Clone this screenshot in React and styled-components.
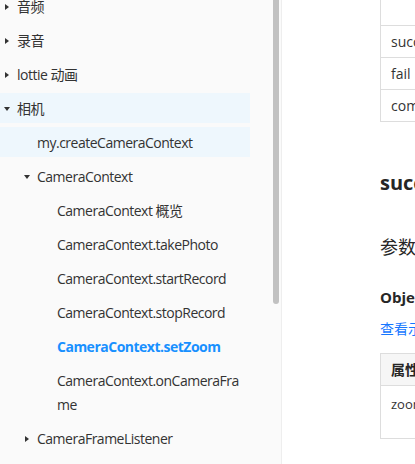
import styled, { createGlobalStyle } from 'styled-components';

const GlobalStyle = createGlobalStyle`
  html, body {
    margin: 0;
    padding: 0;
    height: 464px;
    overflow: hidden;
    background: #fff;
  }
  body {
    font-family: 'Open Sans', 'Noto Sans CJK SC', sans-serif;
    font-size: 14px;
    color: #333;
  }
`;

const Page = styled.div`
  display: flex;
  height: 464px;
  overflow: hidden;
`;

const Sidebar = styled.aside`
  width: 281px;
  flex: none;
  display: flex;
  background: #fafafa;
  border-right: 1px solid #eeeeee;
  overflow: hidden;
  letter-spacing: -0.5px;
`;

const NavList = styled.ul`
  width: 270px;
  margin: -9px 0 0;
  padding: 0;
  list-style: none;
`;

const NavItem = styled.li`
  width: 250px;
  box-sizing: border-box;
  display: flex;
  align-items: center;
  padding: 4px 10px 2px ${(p) => 17 + p.$level * 20}px;
  margin-bottom: 4px;
  line-height: 24px;
  background: ${(p) => (p.$highlight ? '#eef7fd' : 'transparent')};
  color: ${(p) => (p.$active ? '#1890ff' : '#333')};
  font-weight: ${(p) => (p.$active ? 700 : 400)};
`;

const Label = styled.span`
  min-width: 0;
  word-break: break-all;
`;

const Caret = styled.span`
  flex: none;
  width: 0;
  height: 0;
  border-style: solid;
  ${(p) =>
    p.$open
      ? `
    border-width: 4px 3px 0 3px;
    border-color: #333 transparent transparent transparent;
    margin: 0 7px 0 -13px;
  `
      : `
    border-width: 3px 0 3px 4px;
    border-color: transparent transparent transparent #333;
    margin: 0 8px 0 -12px;
  `}
`;

const ScrollTrack = styled.div`
  width: 11px;
  flex: none;
`;

const ScrollThumb = styled.div`
  width: 6px;
  height: 304px;
  margin-left: 3px;
  border-radius: 0 0 3px 3px;
  background: #c1c1c1;
`;

const Main = styled.main`
  flex: 1;
  min-width: 0;
  padding-left: 98px;
  overflow: hidden;
`;

const Table = styled.div`
  width: 600px;
  border-top: 1px solid #dddddd;
  border-left: 1px solid #dddddd;
  margin-top: ${(p) => p.$offset || 0}px;
`;

const Cell = styled.div`
  box-sizing: border-box;
  height: ${(p) => p.$height || 32}px;
  padding: ${(p) => (p.$top ? '8px 10px 0' : '0 10px')};
  line-height: ${(p) => (p.$top ? '20px' : '31px')};
  border-bottom: 1px solid #dddddd;
  background: ${(p) => (p.$head ? '#f6f6f6' : '#fff')};
  font-weight: ${(p) => (p.$head ? 700 : 400)};
  font-size: ${(p) => p.$size || 14}px;
  color: ${(p) => (p.$head ? '#262626' : '#333')};
  white-space: nowrap;
`;

const Heading = styled.h3`
  margin: 46px 0 0;
  font-size: 20px;
  line-height: 30px;
  font-weight: 700;
  color: #262626;
  white-space: nowrap;
`;

const SubHeading = styled.h4`
  margin: 35px 0 0;
  font-size: 18px;
  line-height: 28px;
  font-weight: 400;
  color: #262626;
  white-space: nowrap;
`;

const TypeName = styled.p`
  margin: 24px 0 0;
  font-size: 15px;
  line-height: 24px;
  font-weight: 700;
  color: #262626;
  white-space: nowrap;
`;

const DocLink = styled.a`
  display: block;
  margin-top: 9px;
  line-height: 22px;
  color: #1677ff;
  text-decoration: none;
  white-space: nowrap;
`;

const navItems = [
  { label: '音频', level: 0, caret: 'closed' },
  { label: '录音', level: 0, caret: 'closed' },
  { label: 'lottie 动画', level: 0, caret: 'closed' },
  { label: '相机', level: 0, caret: 'open', highlight: true },
  { label: 'my.createCameraContext', level: 1, highlight: true },
  { label: 'CameraContext', level: 1, caret: 'open' },
  { label: 'CameraContext 概览', level: 2 },
  { label: 'CameraContext.takePhoto', level: 2 },
  { label: 'CameraContext.startRecord', level: 2 },
  { label: 'CameraContext.stopRecord', level: 2 },
  { label: 'CameraContext.setZoom', level: 2, active: true },
  { label: 'CameraContext.onCameraFrame', level: 2 },
  { label: 'CameraFrameListener', level: 1, caret: 'closed' },
];

const App = () => (
  <>
    <GlobalStyle />
    <Page>
      <Sidebar>
        <NavList>
          {navItems.map((item) => (
            <NavItem
              key={item.label}
              $level={item.level}
              $highlight={item.highlight}
              $active={item.active}
            >
              {item.caret && <Caret $open={item.caret === 'open'} />}
              <Label>{item.label}</Label>
            </NavItem>
          ))}
        </NavList>
        <ScrollTrack>
          <ScrollThumb />
        </ScrollTrack>
      </Sidebar>
      <Main>
        <Table $offset={-7}>
          <Cell />
          <Cell>success</Cell>
          <Cell>fail</Cell>
          <Cell>complete</Cell>
        </Table>
        <Heading>success 回调函数</Heading>
        <SubHeading>参数</SubHeading>
        <TypeName>Object res</TypeName>
        <DocLink href="#">查看示例</DocLink>
        <Table $offset={13}>
          <Cell $head>属性</Cell>
          <Cell $top $height={53} $size={13}>zoom</Cell>
        </Table>
      </Main>
    </Page>
  </>
);

export default App;
